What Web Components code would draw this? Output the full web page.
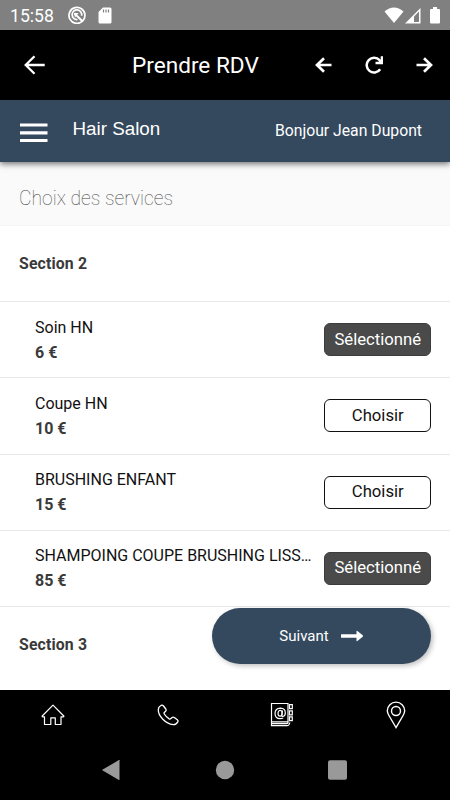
<!DOCTYPE html>
<html lang="fr">
<head>
<meta charset="utf-8">
<title>Prendre RDV</title>
<style>
  html,
  body {
    height: 100%;
    margin: 0;
  }

  body {
    background-color: #ffffff;
    font-family: Roboto, "Liberation Sans", sans-serif;
    overflow: hidden;
  }
</style>
</head>
<body>
<hs-app>
  <hs-status-bar slot="top" time="15:58"></hs-status-bar>
  <hs-title-bar slot="top" label="Prendre RDV"></hs-title-bar>
  <hs-header slot="top" label="Hair Salon">Bonjour Jean Dupont</hs-header>
  <hs-subtitle>Choix des services</hs-subtitle>
  <hs-section>Section 2</hs-section>
  <hs-service label="Soin HN" price="6 €" selected></hs-service>
  <hs-service label="Coupe HN" price="10 €"></hs-service>
  <hs-service label="BRUSHING ENFANT" price="15 €"></hs-service>
  <hs-service label="SHAMPOING COUPE BRUSHING LISS…" price="85 €" selected></hs-service>
  <hs-section>Section 3</hs-section>
  <hs-next slot="action">Suivant</hs-next>
  <hs-tabs slot="bottom"></hs-tabs>
  <hs-system-nav slot="bottom"></hs-system-nav>
</hs-app>

<script>
  const ICONS = {
    assistant: {
      size: [18, 18],
      body: `<g fill="none" stroke="#fff">
        <path d="M14.500 15.200A8 8 0 1 1 17 9.200c0 2.400-.8 4-2.500 6" stroke-width="1.700"/>
        <path d="M9.500 13.500A4.800 4.800 0 1 1 13.600 9.800" stroke-width="1.700"/>
        <path d="M6.500 7.500L14.500 15.300" stroke-width="2"/>
        <path d="M6 7h4.500L7 11.500z" fill="#fff" stroke="none"/>
      </g>`
    },
    sdcard: {
      size: [14, 17],
      body: `<path d="M5 .5h7q1.500 0 1.500 1.500v13q0 1.500-1.500 1.500H2Q.5 16.500.5 15V5z" fill="#fff"/>
        <path d="M5.500 2.500v3M8 2.500v3M10.500 2.500v3" stroke="#808080" stroke-width="1.200"/>`
    },
    wifi: {
      size: [20, 17],
      body: `<path d="M.5 4.500Q10-3.500 19.500 4.500L10 16z" fill="#fff"/>`
    },
    signal: {
      size: [16, 16],
      body: `<path d="M0 15.500L15.500 0v15.500z" fill="#fff"/>
        <path d="M9 8.500L14 3.500v10.500H9z" fill="#808080"/>`
    },
    battery: {
      size: [10, 17],
      body: `<path d="M3 0h4v2h2q1 0 1 1v12.500q0 1-1 1H1q-1 0-1-1V3q0-1 1-1h2z" fill="#fff"/>`
    },
    back: {
      size: [22, 20],
      body: `<path d="M20.700 10H2M10.500 1.200L1.700 10l8.800 8.800" fill="none" stroke="#fff" stroke-width="2.300"/>`
    },
    left: {
      size: [17, 16],
      body: `<path d="M16.500 8H3M9 1.200L2 8l7 6.800" fill="none" stroke="#fff" stroke-width="2.700"/>`
    },
    right: {
      size: [17, 16],
      body: `<path d="M.5 8H14M8 1.200L15 8l-7 6.800" fill="none" stroke="#fff" stroke-width="2.700"/>`
    },
    reload: {
      size: [18, 18],
      body: `<path d="M15.200 13.300A7.400 7.400 0 1 1 14.600 4.200L15.500 6" fill="none" stroke="#fff" stroke-width="2.500"/>
        <path d="M18 .3v7.900h-7.500V5.800h3.200L15.700 4V.3z" fill="#fff"/>`
    },
    menu: {
      size: [28, 20],
      body: `<path d="M0 2h27.500M0 9.800h27.500M0 17.500h27.500" stroke="#fff" stroke-width="3.200"/>`
    },
    next: {
      size: [23, 12],
      body: `<path d="M.5 4.200H15.500V1.300q0-1 .9-.3l5.300 4.300q.7.700 0 1.400l-5.300 4.300q-.9.700-.9-.3V7.700H.5q-.5 0-.5-.5V4.700q0-.5.5-.5z" fill="#fff"/>`
    },
    home: {
      size: [24, 22],
      body: `<path d="M1.200 12L12 1.200 22.800 12q.3.800-.6.800H20v7.700h-5.700v-6.700H9.800v6.700H3.500v-7.700H1.800q-.9 0-.6-.8z" fill="none" stroke="#fff" stroke-width="1.200" stroke-linejoin="round"/>`
    },
    phone: {
      size: [22, 22],
      body: `<path d="M4.200 1.300Q5.500.7 6.500 2l2.300 3q.8 1.200-.2 2.200L7.300 8.500q-.5.700 0 1.500 2 3.200 4.900 4.900.8.400 1.400-.1l1.600-1.300q1-.8 2.100 0l3 2.200q1.200 1 .5 2.200-1.600 3-4.700 2.700-5.600-.5-10.500-5.600Q1 10.200 1.300 5.500 1.500 2.800 4.200 1.300z" fill="none" stroke="#fff" stroke-width="1.300"/>`
    },
    contacts: {
      size: [24, 26],
      body: `<g fill="none" stroke="#fff" stroke-width="1.200">
        <path d="M1.500 1.500H18v18.300H1.500zM1.500 19.500v4.200H17q2.300 0 2.800-3.200M1.500 21.600H17q1.200 0 1.200-2"/>
        <path d="M19.500 2.700h2.800v4h-2.800zM19.500 8.800h2.800v4h-2.800zM19.500 14.800h2.800v3.900h-2.800z"/>
        <path d="M12.500 8.500l-.7 4.200q-.3 2 1.200 1.800 2.300-.5 2.300-3.700 0-4.500-4.800-4.700-5.300.1-5.500 5.300.2 5 5 5.300 1.800 0 3.200-.7"/>
        <ellipse cx="10.100" cy="11.300" rx="2.100" ry="2.900"/>
      </g>`
    },
    pin: {
      size: [20, 28],
      body: `<g fill="none" stroke="#fff" stroke-width="1.400">
        <path d="M10 26.500L3.200 15Q1.300 12 1.300 9.800a8.700 8.700 0 0 1 17.400 0q0 2.200-1.900 5.200z"/>
        <circle cx="10" cy="10" r="4.500"/>
      </g>`
    },
    sysback: {
      size: [20, 20],
      body: `<path d="M17.500.3v19.400q0 .5-.6.200L.7 10.400q-.6-.4 0-.8L16.900.1q.6-.3.600.2z" fill="#999"/>`
    },
    syshome: {
      size: [20, 20],
      body: `<circle cx="10" cy="10" r="9.200" fill="#999"/>`
    },
    sysrecent: {
      size: [20, 20],
      body: `<rect y=".2" width="19" height="19.500" rx="2" fill="#999"/>`
    }
  };

  // Base class
  // Attaches the shadow root and clones the template
  class HSElement extends HTMLElement {
    constructor() {
      super();

      const template = document.createElement( 'template' );
      template.innerHTML = this.constructor.template;

      // Root
      this.attachShadow( {mode: 'open'} );
      this.shadowRoot.appendChild( template.content.cloneNode( true ) );
    }

    // Fill parts from attributes
    _render() {
      for( const name of ['label', 'price', 'time'] ) {
        const part = this.shadowRoot.querySelector( `[part=${name}]` );
        if( part ) part.textContent = this.getAttribute( name );
      }
    }

    // Setup
    connectedCallback() {
      this._render();
    }
  }

  class HSIcon extends HSElement {
    static template = /* template */ `
      <style>
        :host {
          display: block;
          flex-shrink: 0;
        }

        svg {
          display: block;
        }
      </style>
      <svg></svg>
    `;

    _render() {
      const icon = ICONS[this.getAttribute( 'name' )];
      const svg = this.shadowRoot.querySelector( 'svg' );
      svg.setAttribute( 'width', icon.size[0] );
      svg.setAttribute( 'height', icon.size[1] );
      svg.setAttribute( 'viewBox', `0 0 ${icon.size.join( ' ' )}` );
      svg.innerHTML = icon.body;
    }
  }

  class HSApp extends HSElement {
    static template = /* template */ `
      <style>
        :host {
          display: flex;
          flex-direction: column;
          height: 800px;
          position: relative;
          width: 450px;
        }

        header {
          position: relative;
          z-index: 1;
        }

        main {
          flex: 1;
          min-height: 0;
          overflow: hidden;
        }

        ::slotted( hs-section:last-of-type ) {
          border-bottom-color: transparent;
        }

        /* Floats over the list */
        aside {
          bottom: 136.500px;
          position: absolute;
          right: 19px;
        }
      </style>
      <header><slot name="top"></slot></header>
      <main><slot></slot></main>
      <aside><slot name="action"></slot></aside>
      <footer><slot name="bottom"></slot></footer>
    `;
  }

  class HSStatusBar extends HSElement {
    static template = /* template */ `
      <style>
        :host {
          align-items: center;
          background-color: #808080;
          box-sizing: border-box;
          color: #ffffff;
          display: flex;
          height: 30px;
          padding: 0 10px;
        }

        [part=time] {
          font-size: 17.600px;
          line-height: 30px;
          margin-right: 13px;
          padding-top: 2px;
          width: 45px;
        }

        hs-icon[name=sdcard] {
          margin-left: 12px;
        }

        hs-icon[name=wifi] {
          margin-left: auto;
        }

        hs-icon[name=signal] {
          margin: 1px 9px 0 1px;
        }
      </style>
      <span part="time"></span>
      <hs-icon name="assistant"></hs-icon>
      <hs-icon name="sdcard"></hs-icon>
      <hs-icon name="wifi"></hs-icon>
      <hs-icon name="signal"></hs-icon>
      <hs-icon name="battery"></hs-icon>
    `;
  }

  class HSTitleBar extends HSElement {
    static template = /* template */ `
      <style>
        :host {
          align-items: center;
          background-color: #000000;
          box-sizing: border-box;
          color: #ffffff;
          display: flex;
          height: 70px;
          padding: 0 17px 0 24px;
        }

        [part=label] {
          flex: 1;
          font-size: 22.600px;
          line-height: 30px;
          margin-left: 86px;
          padding-top: 2px;
          white-space: nowrap;
        }

        nav {
          align-items: center;
          display: flex;
          gap: 32px;
        }

        hs-icon[name=reload] {
          margin: 0 -1px 0 1px;
        }

        hs-icon[name=right] {
          margin-left: 2px;
        }
      </style>
      <hs-icon name="back"></hs-icon>
      <span part="label"></span>
      <nav>
        <hs-icon name="left"></hs-icon>
        <hs-icon name="reload"></hs-icon>
        <hs-icon name="right"></hs-icon>
      </nav>
    `;
  }

  class HSHeader extends HSElement {
    static template = /* template */ `
      <style>
        :host {
          align-items: center;
          background-color: #34495e;
          box-shadow: 0 2px 6px rgba( 0, 0, 0, 0.55 );
          box-sizing: border-box;
          color: #ffffff;
          display: flex;
          height: 62px;
          padding: 0 28px 0 20px;
        }

        hs-icon {
          margin-top: 3px;
        }

        [part=label] {
          flex: 1;
          font-family: "Liberation Sans", Arial, sans-serif;
          font-size: 18.800px;
          margin: 0 0 4px 24.500px;
        }

        [part=user] {
          font-size: 15.750px;
          margin-bottom: 1px;
        }
      </style>
      <hs-icon name="menu"></hs-icon>
      <span part="label"></span>
      <span part="user"><slot></slot></span>
    `;
  }

  class HSSubtitle extends HSElement {
    static template = /* template */ `
      <style>
        :host {
          align-items: center;
          background-color: #fafafa;
          border-bottom: 1px solid #f4f4f4;
          box-sizing: border-box;
          color: #444444;
          display: flex;
          font-size: 19.300px;
          font-weight: 100;
          height: 64px;
          padding: 9px 19px 0;
        }
      </style>
      <slot></slot>
    `;
  }

  class HSSection extends HSElement {
    static template = /* template */ `
      <style>
        :host {
          align-items: center;
          border-bottom: 1px solid #e8e8e8;
          box-sizing: border-box;
          color: #3a3a3a;
          display: flex;
          font-size: 15.800px;
          font-weight: 700;
          height: 76.200px;
          letter-spacing: 0.150px;
          padding: 0 19px;
        }
      </style>
      <slot></slot>
    `;
  }

  class HSService extends HSElement {
    static template = /* template */ `
      <style>
        :host {
          align-items: center;
          border-bottom: 1px solid #e8e8e8;
          box-sizing: border-box;
          display: flex;
          gap: 8px;
          height: 76.200px;
          padding: 0 19px 0 35px;
        }

        div {
          display: flex;
          flex: 1;
          flex-direction: column;
          font-size: 16px;
          line-height: 25px;
          min-width: 0;
        }

        [part=label] {
          color: #111111;
          white-space: nowrap;
        }

        [part=price] {
          color: #3a3a3a;
          font-weight: 700;
        }

        button {
          background-color: #ffffff;
          border: 1px solid #111111;
          border-radius: 6px;
          box-sizing: border-box;
          color: #111111;
          flex-shrink: 0;
          font: 16.700px/30px Roboto, sans-serif;
          height: 33px;
          padding: 0 0 0 1px;
          width: 107.500px;
        }

        :host( [selected] ) button {
          background-color: #4a4a4a;
          border-color: #3c3c3c;
          color: #ffffff;
        }
      </style>
      <div>
        <span part="label"></span>
        <span part="price"></span>
      </div>
      <button></button>
    `;

    _render() {
      super._render();
      this.shadowRoot.querySelector( 'button' ).textContent =
        this.hasAttribute( 'selected' ) ? 'Sélectionné' : 'Choisir';
    }
  }

  class HSNext extends HSElement {
    static template = /* template */ `
      <style>
        :host {
          align-items: center;
          background-color: #34495e;
          border-radius: 28px;
          box-shadow: 2px 2px 5px rgba( 0, 0, 0, 0.25 );
          color: #ffffff;
          display: flex;
          font-size: 15px;
          gap: 12px;
          height: 56px;
          justify-content: center;
          width: 219px;
        }
      </style>
      <slot></slot>
      <hs-icon name="next"></hs-icon>
    `;
  }

  class HSTabs extends HSElement {
    static template = /* template */ `
      <style>
        :host {
          align-items: center;
          background-color: #000000;
          box-sizing: border-box;
          display: flex;
          height: 50px;
          justify-content: space-between;
          padding: 0 44px 0 41px;
        }
      </style>
      <hs-icon name="home"></hs-icon>
      <hs-icon name="phone"></hs-icon>
      <hs-icon name="contacts"></hs-icon>
      <hs-icon name="pin"></hs-icon>
    `;
  }

  class HSSystemNav extends HSElement {
    static template = /* template */ `
      <style>
        :host {
          align-items: center;
          background-color: #000000;
          display: flex;
          gap: 93px;
          height: 60px;
          justify-content: center;
        }
      </style>
      <hs-icon name="sysback"></hs-icon>
      <hs-icon name="syshome"></hs-icon>
      <hs-icon name="sysrecent"></hs-icon>
    `;
  }

  window.customElements.define( 'hs-icon', HSIcon );
  window.customElements.define( 'hs-app', HSApp );
  window.customElements.define( 'hs-status-bar', HSStatusBar );
  window.customElements.define( 'hs-title-bar', HSTitleBar );
  window.customElements.define( 'hs-header', HSHeader );
  window.customElements.define( 'hs-subtitle', HSSubtitle );
  window.customElements.define( 'hs-section', HSSection );
  window.customElements.define( 'hs-service', HSService );
  window.customElements.define( 'hs-next', HSNext );
  window.customElements.define( 'hs-tabs', HSTabs );
  window.customElements.define( 'hs-system-nav', HSSystemNav );
</script>
</body>
</html>
